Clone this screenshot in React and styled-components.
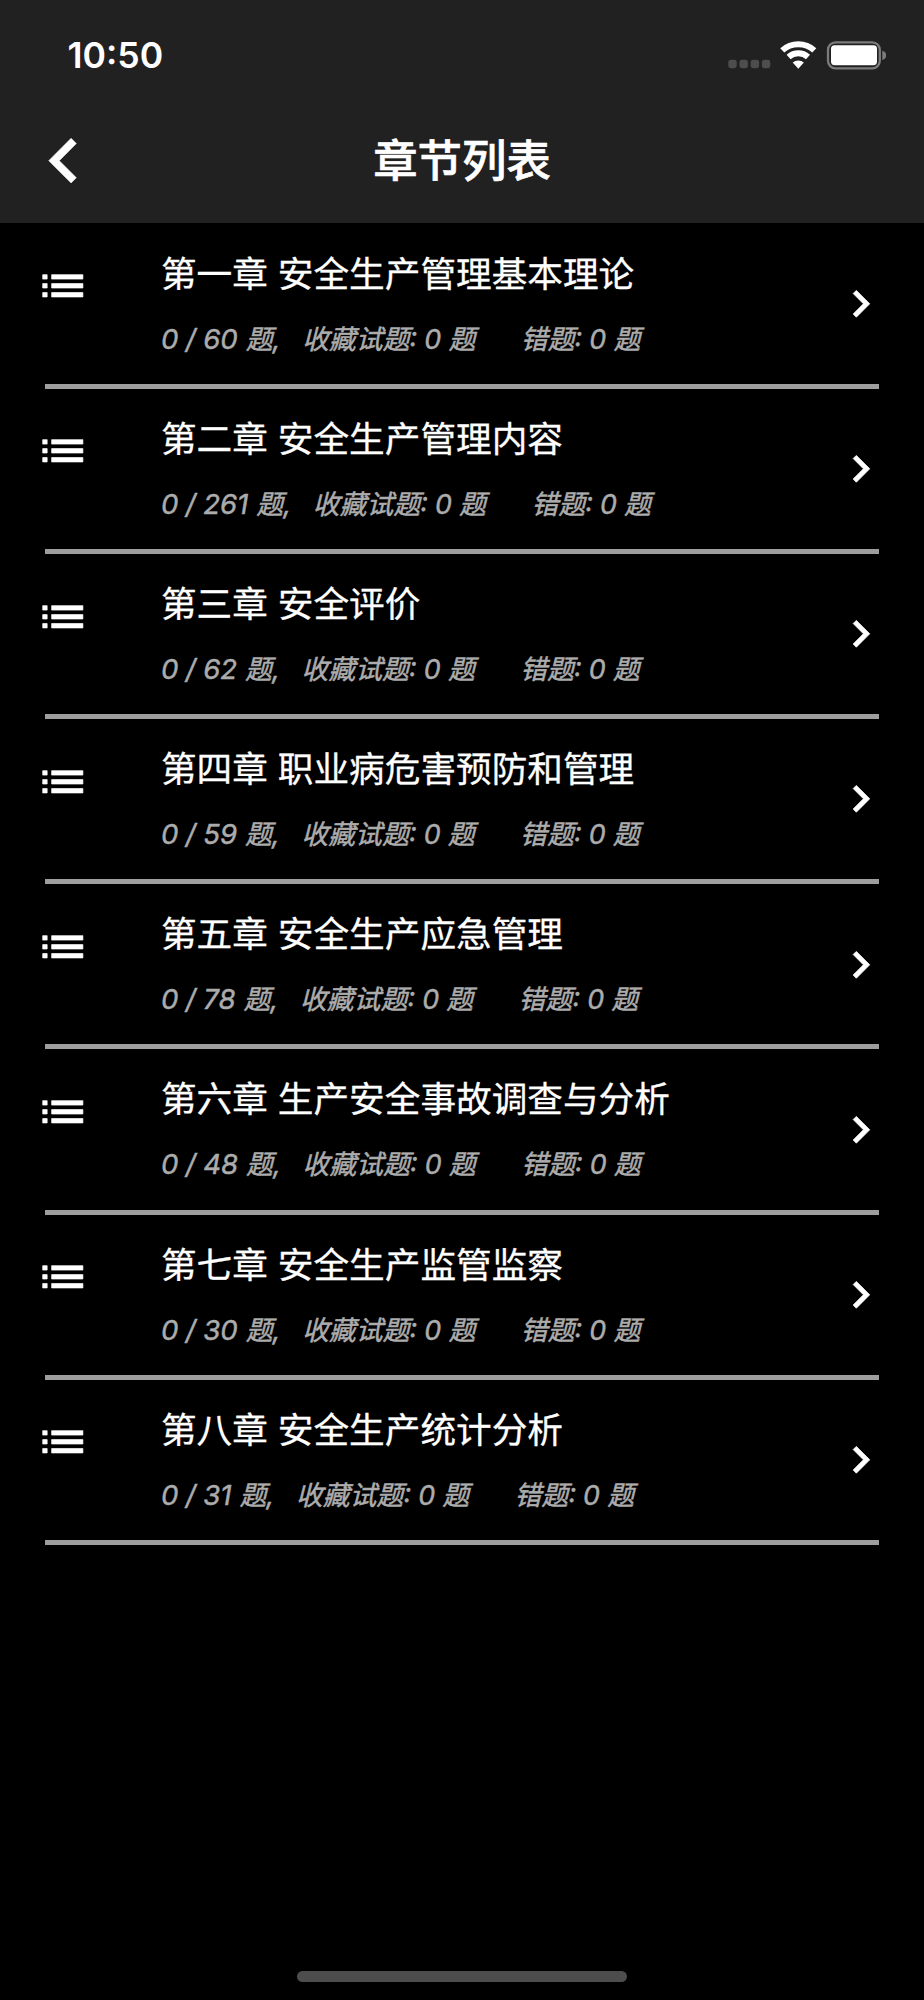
import React from "react";
import styled, { createGlobalStyle } from "styled-components";

const GlobalStyle = createGlobalStyle`
  * { box-sizing: border-box; }
  body {
    margin: 0;
    background: #000;
    font-family: Inter, "Noto Sans CJK SC", sans-serif;
  }
`;

const Screen = styled.div`
  width: 924px;
  height: 2000px;
  display: flex;
  flex-direction: column;
  background: #000;
  color: #fff;
  overflow: hidden;
`;

const Header = styled.header`
  flex: none;
  height: 223px;
  background: #212121;
`;

const StatusBar = styled.div`
  height: 98px;
  padding: 13px 38px 0 67.5px;
  display: flex;
  align-items: center;
  justify-content: space-between;
`;

const Clock = styled.span`
  padding-top: 1px;
  font-size: 35.6px;
  line-height: 44px;
  font-weight: 600;
`;

const StatusIcons = styled.svg`
  display: block;
  width: 160px;
  height: 32px;
  margin-bottom: 1px;
`;

const AppBar = styled.div`
  height: 125px;
  display: grid;
  grid-template-columns: 128px 1fr 128px;
  align-items: center;
`;

const BackButton = styled.button`
  width: 90px;
  height: 90px;
  margin: 0 0 0 19px;
  padding: 0;
  border: 0;
  background: none;
  color: #fff;
`;

const PageTitle = styled.h1`
  margin: 0;
  padding-top: 1px;
  text-align: center;
  font-size: 44.4px;
  line-height: 60px;
  font-weight: 500;
  -webkit-text-stroke: 0.6px currentColor;
`;

const Icon = styled.svg`
  display: block;
  flex: none;
  width: ${(p) => p.$size}px;
  height: ${(p) => p.$size}px;
  fill: currentColor;
  stroke: currentColor;
  stroke-width: ${(p) => p.$stroke || 0};
`;

const ChapterList = styled.ul`
  flex: 1;
  margin: 0;
  padding: 0.6px 0 0;
  list-style: none;
`;

const ChapterRow = styled.li`
  height: 165.16px;
  display: flex;
  flex-direction: column;
`;

const RowBody = styled.div`
  flex: 1;
  display: flex;
  align-items: center;
  padding: 0 36px 0 35.5px;
`;

const Leading = styled.div`
  align-self: flex-start;
  width: 125.4px;
  padding-top: 35.6px;
`;

const Texts = styled.div`
  flex: 1;
  align-self: flex-start;
  padding-top: 24px;
  white-space: nowrap;
`;

const ChapterName = styled.div`
  font-size: 35.65px;
  line-height: 52px;
  -webkit-text-stroke: 0.3px currentColor;
`;

const Stats = styled.div`
  display: flex;
  margin-top: 19px;
  color: #acacac;
  font-size: 26.8px;
  line-height: 40px;
  font-style: italic;
  word-spacing: -0.3px;
  -webkit-text-stroke: 0.5px currentColor;
`;

const Stat = styled.span`
  margin-right: ${(p) => p.$gap || 0}px;
`;

const Numbers = styled.span`
  margin-right: 0.8px;
  font-size: 27.6px;
`;

const Divider = styled.div`
  height: 5px;
  margin: 0 44.6px;
  background: #9e9e9e;
`;

const Footer = styled.footer`
  flex: none;
  height: 29px;
  display: flex;
  justify-content: center;
`;

const HomeIndicator = styled.div`
  width: 330px;
  height: 11px;
  border-radius: 6px;
  background: #4d4d4d;
`;

const chapters = [
  ["第一章 安全生产管理基本理论", 60],
  ["第二章 安全生产管理内容", 261],
  ["第三章 安全评价", 62],
  ["第四章 职业病危害预防和管理", 59],
  ["第五章 安全生产应急管理", 78],
  ["第六章 生产安全事故调查与分析", 48],
  ["第七章 安全生产监管监察", 30],
  ["第八章 安全生产统计分析", 31],
];

function Chapter({ name, total }) {
  return (
    <ChapterRow>
      <RowBody>
        <Leading>
          <Icon $size={53.6} $stroke={0.3} viewBox="0 0 24 24">
            <path d="M3 13h2v-2H3zm0 4h2v-2H3zm0-8h2V7H3zm4 4h14v-2H7zm0 4h14v-2H7zM7 7v2h14V7z" />
          </Icon>
        </Leading>
        <Texts>
          <ChapterName>{name}</ChapterName>
          <Stats>
            <Stat $gap={22}>
              <Numbers>0 / {total}</Numbers> 题,
            </Stat>
            <Stat $gap={45.5}>收藏试题: 0 题</Stat>
            <Stat>错题: 0 题</Stat>
          </Stats>
        </Texts>
        <Icon $size={53.6} $stroke={0.35} viewBox="0 0 24 24">
          <path d="M10 6 8.59 7.41 13.17 12l-4.58 4.59L10 18l6-6z" />
        </Icon>
      </RowBody>
      <Divider />
    </ChapterRow>
  );
}

export default function App() {
  return (
    <Screen>
      <GlobalStyle />
      <Header>
        <StatusBar>
          <Clock>10:50</Clock>
          <StatusIcons viewBox="0 0 160 32">
            <g fill="#4d4d4d">
              <rect x="2.3" y="20.8" width="8.4" height="8.4" rx="2.4" />
              <rect x="13.5" y="20.8" width="8.4" height="8.4" rx="2.4" />
              <rect x="24.7" y="20.8" width="8.4" height="8.4" rx="2.4" />
              <rect x="35.9" y="20.8" width="8.4" height="8.4" rx="2.4" />
            </g>
            <g fill="none" stroke="#fff" strokeWidth="6">
              <path d="M56.3 11.4A23.8 23.8 0 0 1 88.3 11.4" />
              <path d="M62.6 18A14.7 14.7 0 0 1 82 18" />
            </g>
            <path d="M72.3 29.8 66.7 23.6A8.6 8.6 0 0 1 77.9 23.6Z" fill="#fff" />
            <rect x="102" y="3.3" width="51.8" height="26" rx="7.5" fill="none" stroke="#7c7c7c" strokeWidth="2.3" />
            <rect x="105" y="6.2" width="46" height="20" rx="3.6" fill="#fff" />
            <path d="M156.3 11.8c5.2 1.4 5.2 7.8 0 9.2z" fill="#7c7c7c" />
          </StatusIcons>
        </StatusBar>
        <AppBar>
          <BackButton aria-label="返回">
            <Icon $size={89.3} $stroke={0.15} viewBox="0 0 24 24">
              <path d="M15.41 7.41 14 6l-6 6 6 6 1.41-1.41L10.83 12z" />
            </Icon>
          </BackButton>
          <PageTitle>章节列表</PageTitle>
        </AppBar>
      </Header>
      <ChapterList>
        {chapters.map(([name, total]) => (
          <Chapter key={name} name={name} total={total} />
        ))}
      </ChapterList>
      <Footer>
        <HomeIndicator />
      </Footer>
    </Screen>
  );
}
